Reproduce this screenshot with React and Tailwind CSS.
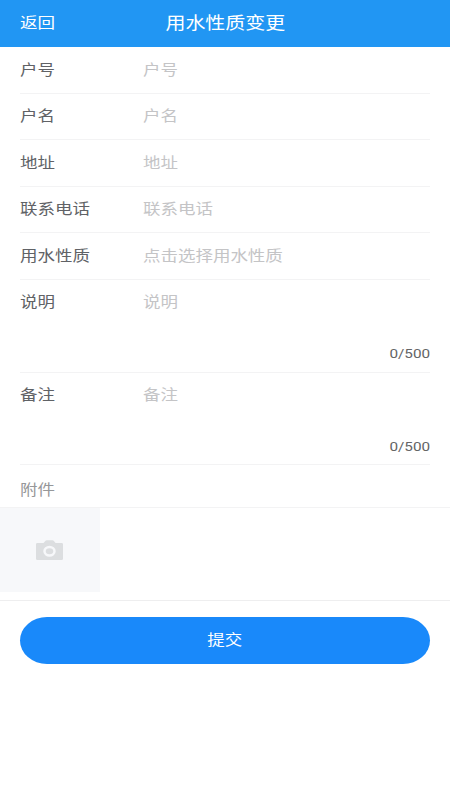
import React from "react";

const rows = [
  { label: "户号", hint: "户号", height: "h-[47px]", line: "h-[44px]" },
  { label: "户名", hint: "户名", height: "h-[46px]", line: "h-[42px]" },
  { label: "地址", hint: "地址", height: "h-[47px]", line: "h-[44px]" },
  { label: "联系电话", hint: "联系电话", height: "h-[46px]", line: "h-[42px]" },
  { label: "用水性质", hint: "点击选择用水性质", height: "h-[47px]", line: "h-[44px]" },
  { label: "说明", hint: "说明", height: "h-[93px]", line: "h-[42px]", count: "0/500", gap: "pb-[8px]" },
  { label: "备注", hint: "备注", height: "h-[92px]", line: "h-[42px]", count: "0/500", gap: "pb-[7px]" },
];

function Wide({ children, className = "origin-left scale-x-[1.19]" }) {
  return (
    <span className={`inline-block whitespace-nowrap ${className}`}>
      {children}
    </span>
  );
}

function Row({ label, hint, height, line, count, gap }) {
  return (
    <div className={`flex flex-col justify-between border-b border-[#f3f3f4] ${height}`}>
      <div className={`flex items-center leading-[22px] ${line}`}>
        <div className="w-[123.5px] text-[#606266]">
          <Wide>{label}</Wide>
        </div>
        <div className="flex-1 text-[#c4c4c6]">
          <Wide>{hint}</Wide>
        </div>
      </div>
      {count && (
        <div className={`text-right font-['Roboto',sans-serif] text-[13.2px] leading-5 text-[#646566] ${gap}`}>
          <Wide className="origin-right scale-x-[1.16]">{count}</Wide>
        </div>
      )}
    </div>
  );
}

export default function App() {
  return (
    <div className="h-[800px] w-full overflow-hidden bg-white font-['Noto_Sans_CJK_SC',sans-serif] text-[14.7px]">
      <header className="grid h-[47px] grid-cols-[1fr_auto_1fr] items-center bg-[#2196f3] px-[19.5px] pb-[3px] text-white">
        <div>
          <Wide>返回</Wide>
        </div>
        <h1 className="pt-[2px] text-[16.8px]">
          <Wide className="origin-center scale-x-[1.19]">用水性质变更</Wide>
        </h1>
      </header>
      <main>
        <div className="pl-[19.5px] pr-5">
          {rows.map((row) => (
            <Row key={row.label} {...row} />
          ))}
        </div>
        <div className="flex h-[43px] items-center border-b border-[#f3f3f4] px-[19.5px] pt-[6px] text-[#969799]">
          <Wide>附件</Wide>
        </div>
        <div className="h-[93px] border-b border-[#eeeeef]">
          <div className="flex h-[84px] w-[100px] items-center justify-center bg-[#f7f8fa] pr-[2px]">
            <svg className="h-5 w-[27px]" viewBox="0 0 27 20" fill="none">
              <path
                d="M1.4 3H7.5L9.3.9Q9.8.2 10.7.2H16.5Q17.4.2 17.9.9L19.6 3H25.6Q27 3 27 4.2V18.8Q27 20 25.6 20H1.4Q0 20 0 18.8V4.2Q0 3 1.4 3Z"
                fill="#dcdee0"
              />
              <ellipse cx="13.5" cy="11.3" rx="5" ry="4.2" stroke="#f7f8fa" strokeWidth="2.5" />
            </svg>
          </div>
        </div>
        <div className="pl-[19.5px] pr-5 pt-4">
          <button className="flex h-[47px] w-full items-center justify-center rounded-[27px/23.5px] bg-[#1989fa] pb-[3px] text-white">
            <Wide className="origin-center scale-x-[1.19]">提交</Wide>
          </button>
        </div>
      </main>
    </div>
  );
}
